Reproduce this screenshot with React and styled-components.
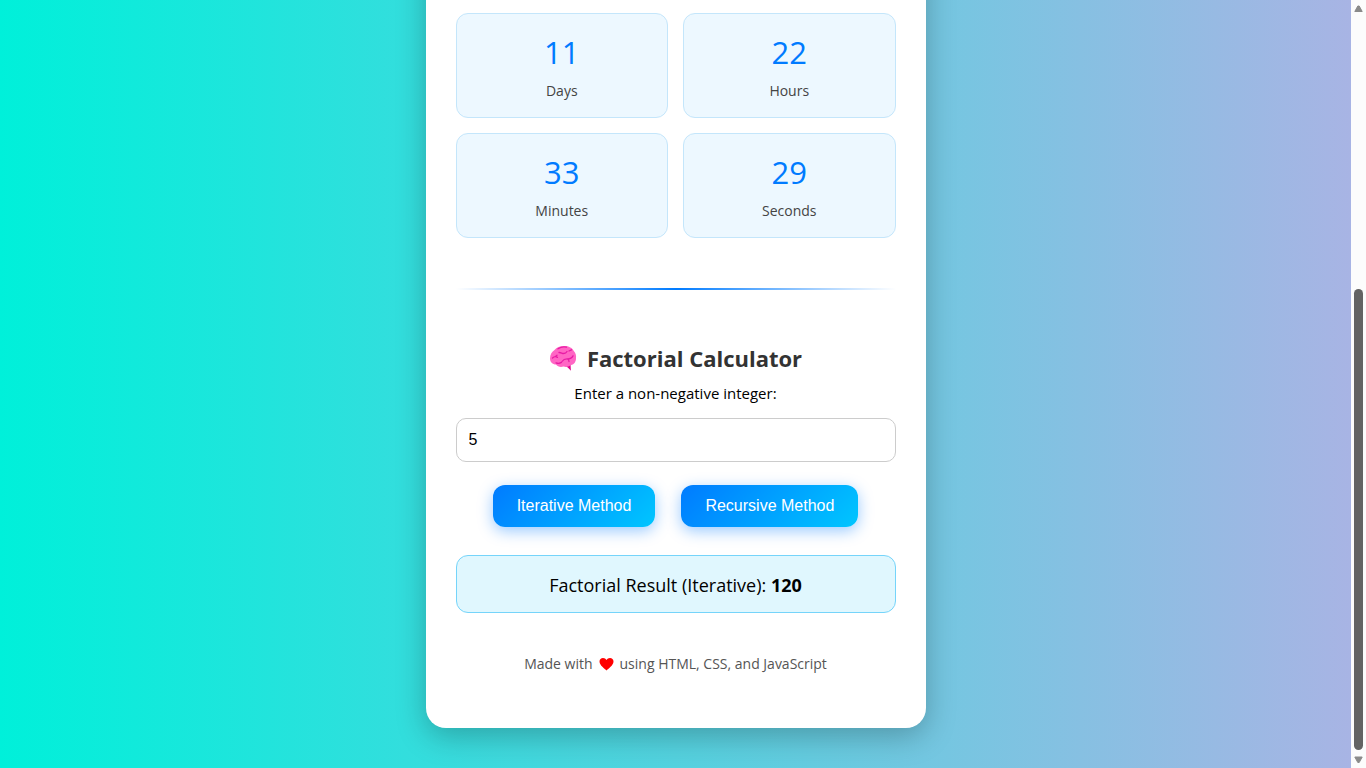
import React, { useState } from "react";
import styled, { createGlobalStyle } from "styled-components";

const GlobalStyle = createGlobalStyle`
  *, *::before, *::after { box-sizing: border-box; }
  body {
    margin: 0;
    font-family: "Segoe UI", "Open Sans", "Noto Sans", sans-serif;
    font-size: 16px;
    color: #000;
  }
  h2, p { margin: 0; }
`;

const Shell = styled.div`
  display: flex;
  height: 100vh;
  overflow: hidden;
`;

const Page = styled.main`
  flex: 1;
  display: flex;
  justify-content: center;
  align-items: flex-start;
  overflow: hidden;
  background: linear-gradient(to right, #00f0da, #a8b4e4);
`;

const Card = styled.div`
  width: 100%;
  max-width: 500px;
  margin-top: -80px;
  padding: 93px 30px 53px;
  border-radius: 20px;
  background: #fff;
  box-shadow: 0 8px 30px rgba(0, 0, 0, 0.25);
  text-align: center;
`;

const TimeGrid = styled.section`
  display: grid;
  grid-template-columns: 1fr 1fr;
  gap: 15px;
`;

const TimeBox = styled.div`
  height: 105px;
  padding-top: 17px;
  border: 1px solid #c4e6fb;
  border-radius: 12px;
  background: #edf8ff;
`;

const TimeValue = styled.div`
  font-size: 31px;
  line-height: 42px;
  color: #007bff;
`;

const TimeLabel = styled.div`
  margin-top: 8px;
  font-size: 14px;
  line-height: 20px;
  color: #444;
`;

const Divider = styled.hr`
  height: 2px;
  margin: 50px 0;
  border: 0;
  background: linear-gradient(to right, transparent, #007bff, transparent);
`;

const Title = styled.h2`
  display: flex;
  justify-content: center;
  align-items: center;
  gap: 10px;
  font-size: 22px;
  line-height: 36px;
  color: #333;
`;

const Label = styled.label`
  display: block;
  margin-top: 5px;
  font-size: 15px;
  line-height: 24px;
`;

const NumberInput = styled.input`
  display: block;
  width: 100%;
  height: 44px;
  margin-top: 13px;
  padding: 0 12px;
  border: 1px solid #ccc;
  border-radius: 10px;
  background: #fff;
  color: #000;
  font: 16px "Liberation Sans", Arial, sans-serif;
`;

const Actions = styled.div`
  display: flex;
  justify-content: center;
  gap: 26px;
  margin-top: 23px;
`;

const MethodButton = styled.button`
  height: 42px;
  padding: 0 24px;
  border: 0;
  border-radius: 12px;
  background: linear-gradient(135deg, #007bff, #00c6ff);
  box-shadow: 0 4px 15px rgba(0, 123, 255, 0.4);
  color: #fff;
  font: 16px "Liberation Sans", Arial, sans-serif;
  cursor: pointer;
`;

const Result = styled.output`
  display: block;
  margin-top: 28px;
  padding: 16px 15px 14px;
  border: 1px solid #75d4fa;
  border-radius: 12px;
  background: #e0f7fe;
  font-size: 18px;
  line-height: 26px;
`;

const Footer = styled.footer`
  display: flex;
  justify-content: center;
  align-items: center;
  gap: 6px;
  margin-top: 40px;
  font-size: 14px;
  line-height: 22px;
  color: #555;
`;

const ScrollTrack = styled.div`
  flex: none;
  width: 15px;
  height: 100%;
  display: flex;
  flex-direction: column;
  align-items: center;
  padding: 5px 0 4px;
  background: #fcfcfc;
`;

const ScrollThumb = styled.div`
  width: 9px;
  height: 60vh;
  margin: auto 0 6px;
  border-radius: 5px;
  background: #636363;
`;

const Brain = () => (
  <svg width="28" height="28" viewBox="0 0 28 28" aria-hidden="true">
    <path d="M15.500 21.500l6-1.500.4 6.800L18.800 23.600z" fill="#e3008c" />
    <path
      d="M1 14.500C1 10.500 3 7.500 5.500 6 7.500 3.500 11 2 15 2c5 0 8.500 2 9.800 5 1.800 2 2.600 4.500 2.200 7 .2 3.500-1.800 6.500-5 7-2.500 2-5 2.200-7.500 1.600-3 .8-6 .2-7.500-2C3.500 20.500 1 18 1 14.500z"
      fill="#ff66c4"
    />
    <path
      d="M9 4.800c2.500-1.700 6-2.200 8.500-1.600M3.500 14c1.500-1.500 3.500-1.600 5-.6M6.500 12.600l1.500-1.400M10 8.500c2-.2 3 1 4.500 1s2.800-.6 3.500-2M20 7l2.500-1.200M13 17.500c1.500-2.200 3.500-2.700 5.500-2.600 2.500 0 4.500-1 5.500-3M18.500 15c1 .6 1.500 1.500 1.500 2.600M7 18.800c2 .8 4 .6 5.500-.4"
      fill="none"
      stroke="#e81ca5"
      strokeWidth="1.300"
      strokeLinecap="round"
    />
  </svg>
);

const Heart = () => (
  <svg width="15" height="14" viewBox="0 0 15 14" role="img" aria-label="love">
    <path
      d="M7.500 13.500C6 12 .5 8.500.5 4.600.5 2.300 2.100 1 4 1c1.500 0 2.800.8 3.500 2C8.200 1.800 9.500 1 11 1c1.900 0 3.500 1.300 3.500 3.600 0 3.900-5.500 7.400-7 8.900z"
      fill="#f00"
    />
  </svg>
);

const Arrow = ({ down }) => (
  <svg width="9" height="8" viewBox="0 0 9 8" aria-hidden="true">
    <path
      d={down ? "M.8 1h7.400L5.200 6.500H3.800z" : "M.8 6.500h7.400L5.200 1H3.800z"}
      fill="#8a8a8a"
      stroke="#8a8a8a"
      strokeLinejoin="round"
    />
  </svg>
);

const times = [
  ["11", "Days"],
  ["22", "Hours"],
  ["33", "Minutes"],
  ["29", "Seconds"],
];

const iterative = (n) => {
  let product = 1;
  for (let i = 2; i <= n; i++) product *= i;
  return product;
};

const recursive = (n) => (n < 2 ? 1 : n * recursive(n - 1));

export default function App() {
  const [value, setValue] = useState("5");
  const [result, setResult] = useState({ method: "Iterative", total: 120 });

  const calculate = (method, fn) => {
    const n = Number(value);
    if (Number.isInteger(n) && n >= 0 && n <= 170) {
      setResult({ method, total: fn(n) });
    }
  };

  return (
    <>
      <GlobalStyle />
      <Shell>
        <Page>
          <Card>
            <TimeGrid>
              {times.map(([amount, unit]) => (
                <TimeBox key={unit}>
                  <TimeValue>{amount}</TimeValue>
                  <TimeLabel>{unit}</TimeLabel>
                </TimeBox>
              ))}
            </TimeGrid>
            <Divider />
            <Title>
              <Brain />
              Factorial Calculator
            </Title>
            <Label htmlFor="number">Enter a non-negative integer:</Label>
            <NumberInput
              id="number"
              inputMode="numeric"
              value={value}
              onChange={(e) => setValue(e.target.value)}
            />
            <Actions>
              <MethodButton type="button" onClick={() => calculate("Iterative", iterative)}>
                Iterative Method
              </MethodButton>
              <MethodButton type="button" onClick={() => calculate("Recursive", recursive)}>
                Recursive Method
              </MethodButton>
            </Actions>
            <Result htmlFor="number">
              Factorial Result ({result.method}): <strong>{result.total}</strong>
            </Result>
            <Footer>
              <span>Made with</span>
              <Heart />
              <span>using HTML, CSS, and JavaScript</span>
            </Footer>
          </Card>
        </Page>
        <ScrollTrack aria-hidden="true">
          <Arrow />
          <ScrollThumb />
          <Arrow down />
        </ScrollTrack>
      </Shell>
    </>
  );
}
